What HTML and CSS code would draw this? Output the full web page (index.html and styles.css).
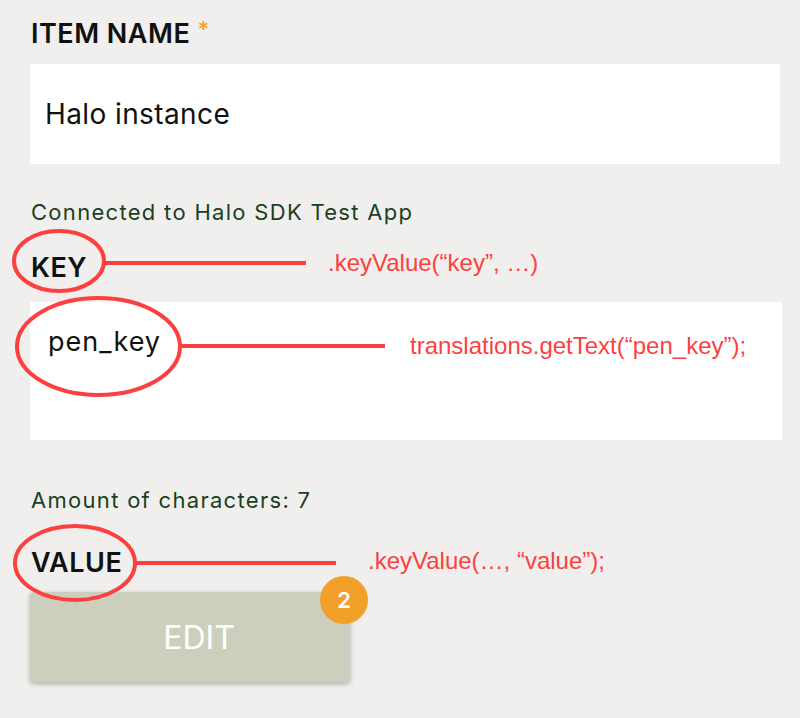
FILE: index.html
```html
<!DOCTYPE html>
<html>
<head>
<meta charset="utf-8">
<link rel="stylesheet" href="styles.css">
</head>
<body>
<div class="page">
  <form class="form">
    <div class="label label-first">ITEM NAME <span class="req">*</span></div>
    <div class="box box-name"><span class="box-text">Halo instance</span></div>
    <div class="hint hint-connected">Connected to Halo SDK Test App</div>
    <div class="label label-key">KEY</div>
    <div class="box box-key"><span class="box-text">pen_key</span></div>
    <div class="hint hint-amount">Amount of characters: 7</div>
    <div class="label label-value">VALUE</div>
    <div class="button-wrap">
      <button type="button" class="edit-btn">EDIT</button>
      <span class="badge">2</span>
    </div>
  </form>

  <div class="annotations">
    <svg class="marks" width="800" height="718" viewBox="0 0 800 718">
      <g fill="none" stroke="#fc3f3f" stroke-width="4">
        <ellipse cx="59" cy="261" rx="45" ry="30"/>
        <ellipse cx="98.5" cy="346.5" rx="81.5" ry="48.5"/>
        <ellipse cx="75" cy="563" rx="60" ry="37"/>
      </g>
      <g fill="#fc3f3f">
        <rect x="104" y="261" width="202" height="4"/>
        <rect x="180" y="344" width="205" height="4"/>
        <rect x="135" y="561" width="201" height="4"/>
      </g>
    </svg>
    <span class="note note-key">.keyValue(“key”, …)</span>
    <span class="note note-text">translations.getText(“pen_key”);</span>
    <span class="note note-value">.keyValue(…, “value”);</span>
  </div>
</div>
</body>
</html>
```

FILE: styles.css
```css
* { box-sizing: border-box; }
html, body {
  margin: 0;
  padding: 0;
  background: #f0efed;
}
.page {
  position: relative;
  width: 800px;
  height: 718px;
  overflow: hidden;
  font-family: "Inter", "DejaVu Sans", sans-serif;
}
.form {
  display: flex;
  flex-direction: column;
  align-items: flex-start;
  padding: 16px 20px 0 30px;
  margin: 0;
}
.label {
  font-size: 27px;
  line-height: 36px;
  height: 36px;
  font-weight: 600;
  color: #111;
  padding-left: 1px;
  letter-spacing: 0.5px;
}
.req {
  color: #f5a623;
  font-size: 22px;
  line-height: 0;
  vertical-align: 6px;
}
.box {
  align-self: stretch;
  background: #fff;
  display: flex;
  color: #111;
}
.box-name {
  margin-top: 12px;
  height: 100px;
  align-items: center;
  padding-left: 15px;
  font-size: 28px;
  letter-spacing: 0.4px;
}
.box-key {
  margin-top: 16px;
  height: 138px;
  margin-right: -2px;
  padding: 23px 0 0 18px;
  align-items: flex-start;
  font-size: 27px;
  letter-spacing: 1px;
}
.hint {
  font-size: 22px;
  line-height: 28px;
  color: #1b3f1f;
  padding-left: 1px;
  letter-spacing: 1.3px;
}
.hint-connected { margin-top: 34px; }
.label-key { margin-top: 24px; }
.hint-amount { margin-top: 46px; }
.label-value { margin-top: 31px; }
.button-wrap {
  position: relative;
  margin-top: 11px;
}
.edit-btn {
  width: 320px;
  height: 90px;
  padding: 0 0 0 18px;
  border: none;
  border-radius: 4px;
  background: #cdcfbd;
  color: #fff;
  font-family: inherit;
  font-size: 32px;
  font-weight: 400;
  box-shadow: 0 2px 5px rgba(0, 0, 0, 0.28);
}
.badge {
  position: absolute;
  top: -16px;
  right: -18px;
  width: 48px;
  height: 48px;
  border-radius: 50%;
  background: #f3a02a;
  color: #fff;
  font-size: 22px;
  font-weight: 600;
  display: flex;
  align-items: center;
  justify-content: center;
}
.annotations {
  position: absolute;
  inset: 0;
  pointer-events: none;
}
.marks {
  position: absolute;
  left: 0;
  top: 0;
}
.note {
  position: absolute;
  font-family: "Liberation Sans", Arial, sans-serif;
  font-size: 24px;
  line-height: 1;
  color: #fc3f3f;
  white-space: nowrap;
}
.note-key { left: 328px; top: 251px; }
.note-text { left: 410px; top: 334px; }
.note-value { left: 368px; top: 549px; }
```
